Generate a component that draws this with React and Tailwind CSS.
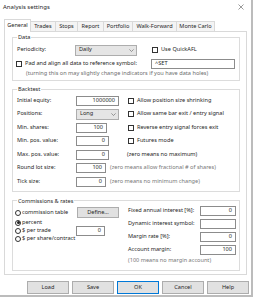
import React from "react";

// Tiny Windows-style dialog: "Analysis settings"

function Check({ label, className = "" }) {
  return (
    <div className={`flex items-center gap-[3px] ${className}`}>
      <span className="w-[6px] h-[6px] border border-[#333] bg-white shrink-0" />
      <span className="whitespace-nowrap">{label}</span>
    </div>
  );
}

function Radio({ label, on = false }) {
  return (
    <div className="flex items-center gap-[1px]">
      <span className="w-[6px] h-[6px] rounded-full border border-[#333] bg-white flex items-center justify-center shrink-0">
        {on && <span className="w-[3px] h-[3px] rounded-full bg-[#222]" />}
      </span>
      <span className="whitespace-nowrap">{label}</span>
    </div>
  );
}

function Field({ w, value = "", left = false }) {
  return (
    <div
      className={`${w} h-[10px] border border-[#8c8c8c] bg-white flex items-center shrink-0 ${
        left ? "justify-start pl-[3px]" : "justify-end pr-[3px]"
      }`}
    >
      {value}
    </div>
  );
}

function Select({ w, value }) {
  return (
    <div className={`${w} h-[11px] border border-[#adadad] bg-[#e5e5e5] flex items-center justify-between pl-[3px] pr-[2px] shrink-0`}>
      <span>{value}</span>
      <svg width="5" height="3" viewBox="0 0 5 3">
        <path d="M0.4 0.4 L2.5 2.5 L4.6 0.4" fill="none" stroke="#606060" strokeWidth="0.6" />
      </svg>
    </div>
  );
}

function Btn({ children, primary = false }) {
  return (
    <div
      className={`w-[42px] h-[13px] bg-[#e1e1e1] flex items-center justify-center ${
        primary ? "border-[1.5px] border-[#0078d7]" : "border border-[#adadad]"
      }`}
    >
      {children}
    </div>
  );
}

const TABS = [
  { name: "General", w: "w-[27px]" },
  { name: "Trades", w: "w-[25px]" },
  { name: "Stops", w: "w-[22px]" },
  { name: "Report", w: "w-[26px]" },
  { name: "Portfolio", w: "w-[29px]" },
  { name: "Walk-Forward", w: "w-[44px]" },
  { name: "Monte Carlo", w: "w-[38px]" },
];

export default function App() {
  return (
    <div className="w-[256px] h-[300px] bg-white overflow-hidden font-['Noto_Sans','Open_Sans',sans-serif] text-[5.6px] leading-none text-[#262626]">
      <div className="w-[253px] h-[297px] bg-white border-r-2 border-b-2 border-[#bcbcbc] flex flex-col">
        {/* title bar */}
        <div className="h-[19px] flex items-start justify-between pl-[3px] pr-[7px] pt-[3px] shrink-0">
          <span className="text-[6px] leading-[8px]">Analysis settings</span>
          <svg width="6" height="6" viewBox="0 0 6 6" className="mt-[1px]">
            <path d="M0.5 0.5 L5.5 5.5 M5.5 0.5 L0.5 5.5" stroke="#555" strokeWidth="0.6" />
          </svg>
        </div>

        {/* tabs */}
        <div className="h-[12px] flex items-end pl-[4px] relative z-10 shrink-0">
          {TABS.map((t, i) =>
            i === 0 ? (
              <div
                key={t.name}
                className={`${t.w} h-[13px] -mb-[1px] bg-white border border-b-0 border-[#d9d9d9] flex items-center justify-center`}
              >
                {t.name}
              </div>
            ) : (
              <div
                key={t.name}
                className={`${t.w} h-[10px] bg-[#f4f4f4] border-t border-r border-[#d9d9d9] flex items-center justify-center whitespace-nowrap`}
              >
                {t.name}
              </div>
            )
          )}
        </div>

        {/* panel */}
        <div className="ml-[4px] w-[243px] h-[244px] border border-[#d9d9d9] bg-white pl-[7px] pr-[6px] pt-[1px] shrink-0">
          {/* Data */}
          <fieldset className="border border-[#dcdcdc] px-0">
            <legend className="ml-[4px] px-[1px] h-[8px] leading-[8px]">Data</legend>
            <div className="pt-[3px] pb-[2px]">
              <div className="h-[12px] flex items-center pl-[4px]">
                <span className="w-[58px] shrink-0">Periodicity:</span>
                <Select w="w-[62px]" value="Daily" />
                <Check label="Use QuickAFL" className="ml-[15px]" />
              </div>
              <div className="h-[12px] mt-[2px] flex items-center pl-[3px] pr-[4px]">
                <Check label="Pad and align all data to reference symbol:" className="flex-1" />
                <Field w="w-[84px]" value="^SET" left />
              </div>
              <div className="h-[8px] flex items-center pl-[13px] text-[#6e6e6e]">
                (turning this on may slightly change indicators if you have data holes)
              </div>
            </div>
          </fieldset>

          {/* Backtest */}
          <fieldset className="border border-[#dcdcdc] px-0 mt-[4px]">
            <legend className="ml-[4px] px-[1px] h-[8px] leading-[8px]">Backtest</legend>
            <div className="pt-[1px] pb-[2px]">
              <div className="h-[13.5px] flex items-center pl-[4px]">
                <span className="w-[59px] shrink-0">Initial equity:</span>
                <div className="w-[52px] shrink-0"><Field w="w-[43px]" value="1000000" /></div>
                <Check label="Allow position size shrinking" />
              </div>
              <div className="h-[13.5px] flex items-center pl-[4px]">
                <span className="w-[59px] shrink-0">Positions:</span>
                <div className="w-[52px] shrink-0"><Select w="w-[43px]" value="Long" /></div>
                <Check label="Allow same bar exit / entry signal" />
              </div>
              <div className="h-[13.5px] flex items-center pl-[4px]">
                <span className="w-[59px] shrink-0">Min. shares:</span>
                <div className="w-[52px] shrink-0"><Field w="w-[31px]" value="100" /></div>
                <Check label="Reverse entry signal forces exit" />
              </div>
              <div className="h-[13.5px] flex items-center pl-[4px]">
                <span className="w-[59px] shrink-0">Min. pos. value:</span>
                <div className="w-[52px] shrink-0"><Field w="w-[33px]" value="0" /></div>
                <Check label="Futures mode" />
              </div>
              <div className="h-[13.5px] flex items-center pl-[4px]">
                <span className="w-[59px] shrink-0">Max. pos. value:</span>
                <div className="w-[51px] shrink-0"><Field w="w-[33px]" value="0" /></div>
                <span className="text-[#222]">(zero means no maximum)</span>
              </div>
              <div className="h-[13.5px] flex items-center pl-[4px]">
                <span className="w-[59px] shrink-0">Round lot size:</span>
                <Field w="w-[30px]" value="100" />
                <span className="ml-[4px] text-[#777] whitespace-nowrap">(zero means allow fractional # of shares)</span>
              </div>
              <div className="h-[13.5px] flex items-center pl-[4px]">
                <span className="w-[59px] shrink-0">Tick size:</span>
                <Field w="w-[30px]" value="0" />
                <span className="ml-[4px] text-[#777] whitespace-nowrap">(zero means no minimum change)</span>
              </div>
            </div>
          </fieldset>

          {/* Commissions & rates */}
          <fieldset className="border border-[#dcdcdc] px-0 mt-[5px]">
            <legend className="ml-[4px] px-[1px] h-[8px] leading-[8px]">Commissions &amp; rates</legend>
            <div className="flex pb-[4px]">
              <div className="w-[115px] shrink-0 pl-[2px] pt-[2px]">
                <div className="h-[12px] flex items-center">
                  <div className="w-[62px] shrink-0"><Radio label="commission table" /></div>
                  <div className="w-[42px] h-[11px] bg-[#e1e1e1] border border-[#adadad] flex items-center justify-center">
                    Define...
                  </div>
                </div>
                <div className="h-[8px] flex items-center"><Radio label="percent" on /></div>
                <div className="h-[8px] flex items-center">
                  <div className="w-[61px] shrink-0"><Radio label="$ per trade" /></div>
                  <Field w="w-[29px]" value="0" />
                </div>
                <div className="h-[8px] flex items-center"><Radio label="$ per share/contract" /></div>
              </div>
              <div className="flex-1 pr-[3px]">
                <div className="h-[13px] flex items-center">
                  <span className="flex-1">Fixed annual interest [%]:</span>
                  <Field w="w-[36px]" value="0" />
                </div>
                <div className="h-[13px] flex items-center">
                  <span className="flex-1">Dynamic interest symbol:</span>
                  <Field w="w-[36px]" />
                </div>
                <div className="h-[13px] flex items-center">
                  <span className="flex-1">Margin rate [%]:</span>
                  <Field w="w-[36px]" value="0" />
                </div>
                <div className="h-[13px] flex items-center">
                  <span className="flex-1">Account margin:</span>
                  <Field w="w-[36px]" value="100" />
                </div>
                <div className="h-[9px] flex items-center text-[#777]">(100 means no margin account)</div>
              </div>
            </div>
          </fieldset>
        </div>

        {/* buttons */}
        <div className="flex pt-[6px] pl-[27px] gap-[3px]">
          <Btn>Load</Btn>
          <Btn>Save</Btn>
          <Btn primary>OK</Btn>
          <Btn>Cancel</Btn>
          <Btn>Help</Btn>
        </div>
      </div>
    </div>
  );
}
